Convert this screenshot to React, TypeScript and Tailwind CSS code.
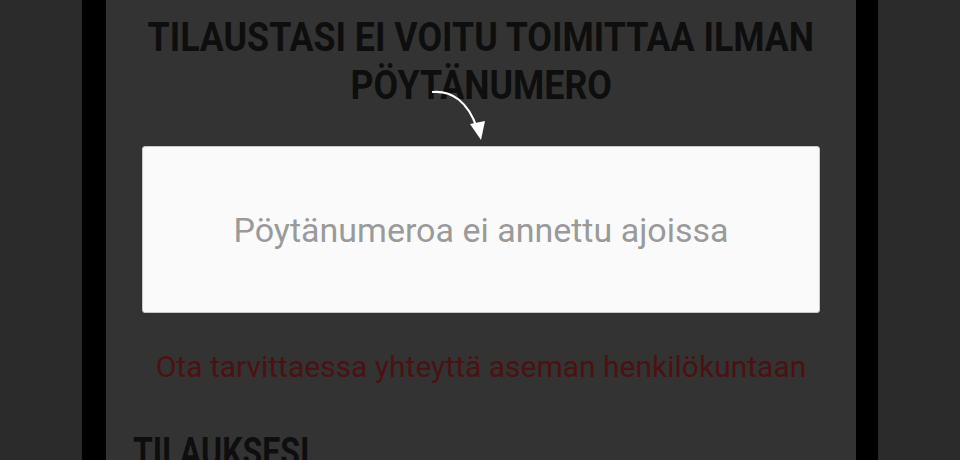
import React from "react";

export default function App() {
  return (
    <div className="flex h-[460px] w-[960px] overflow-hidden bg-[#2b2b2b]" style={{ fontFamily: "Roboto, 'Noto Sans', sans-serif" }}>
      <div className="w-[82px] shrink-0" />
      <div className="w-[24px] shrink-0 bg-black" />
      <div className="relative flex w-[750px] shrink-0 flex-col bg-[#333333] px-[36px]">
        <h1 className="mt-[14px] flex shrink-0 flex-col items-center text-[40px] font-bold leading-[48px] text-[#0e0e0e]">
          <span className="block origin-center scale-x-[0.894] whitespace-nowrap">TILAUSTASI EI VOITU TOIMITTAA ILMAN</span>
          <span className="block origin-center scale-x-[0.894] whitespace-nowrap">PÖYTÄNUMERO</span>
        </h1>
        <svg className="absolute left-[324px] top-[88px]" width="60" height="56" viewBox="0 0 60 56" fill="none">
          <path d="M2 4 C 22 2, 38 14, 47 40" stroke="white" strokeWidth="2.2" fill="none" />
          <path d="M40 36 L 51 52 L 55 33 Z" fill="white" />
        </svg>
        <div className="mt-[36px] flex h-[167px] shrink-0 items-center justify-center rounded-[3px] border border-[#c8c8c8] bg-[#fafafa]">
          <span className="text-[34px] leading-[40px] text-[#9a9a9a]">Pöytänumeroa ei annettu ajoissa</span>
        </div>
        <p className="mt-[36px] shrink-0 whitespace-nowrap text-center text-[30px] leading-[36px] text-[#4a1212]">Ota tarvittaessa yhteyttä aseman henkilökuntaan</p>
        <h2 className="mt-[44px] -ml-[9px] shrink-0 text-[40px] font-bold leading-[48px] text-[#0e0e0e]">
          <span className="inline-block origin-left scale-x-[0.8] whitespace-nowrap">TILAUKSESI</span>
        </h2>
      </div>
      <div className="w-[22px] shrink-0 bg-black" />
      <div className="flex-1" />
    </div>
  );
}
